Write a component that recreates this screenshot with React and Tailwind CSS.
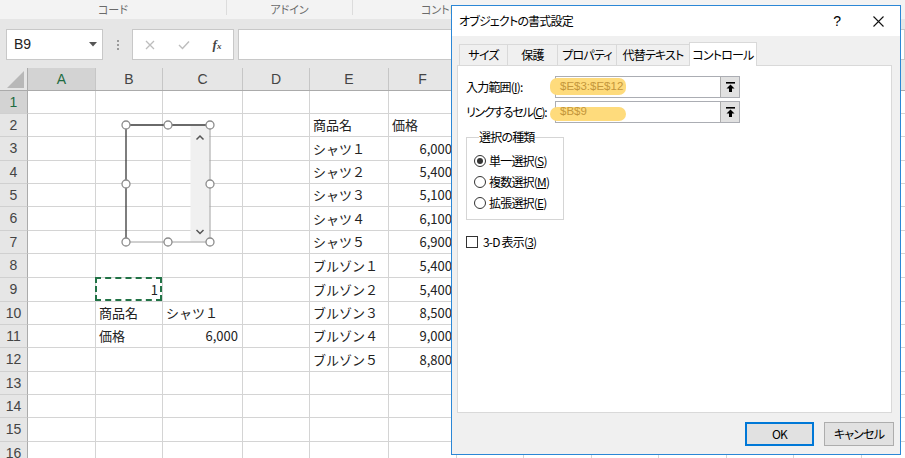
import React from 'react';

const jp = "font-['Noto_Sans_CJK_JP',sans-serif]";
const ui = "font-['Noto_Sans_CJK_JP',sans-serif] [font-feature-settings:'palt']";
const latin = "font-['Liberation_Sans',sans-serif]";

const columns = [
  { key: 'A', width: 'w-[68px]' },
  { key: 'B', width: 'w-[67px]' },
  { key: 'C', width: 'w-[80px]' },
  { key: 'D', width: 'w-[67px]' },
  { key: 'E', width: 'w-[79px]' },
  { key: 'F', width: 'w-[68px]' },
  { key: 'G', width: 'w-[67px]' },
  { key: 'H', width: 'w-[68px]' },
  { key: 'I', width: 'w-[67px]' },
  { key: 'J', width: 'w-[68px]' },
  { key: 'K', width: 'w-[67px]' },
  { key: 'L', width: 'w-[68px]' },
  { key: 'M', width: 'w-[68px]' },
];

const rowHeights = [
  'h-[23px]', 'h-[23px]', 'h-[24px]', 'h-[23px]', 'h-[23px]', 'h-[24px]', 'h-[23px]', 'h-[24px]',
  'h-[24px]', 'h-[23px]', 'h-[23px]', 'h-[24px]', 'h-[23px]', 'h-[23px]', 'h-[24px]', 'h-[24px]',
];

const cells = {
  '2E': { text: '商品名' },
  '2F': { text: '価格' },
  '3E': { text: 'シャツ１' },
  '3F': { text: '6,000', right: true },
  '4E': { text: 'シャツ２' },
  '4F': { text: '5,400', right: true },
  '5E': { text: 'シャツ３' },
  '5F': { text: '5,100', right: true },
  '6E': { text: 'シャツ４' },
  '6F': { text: '6,100', right: true },
  '7E': { text: 'シャツ５' },
  '7F': { text: '6,900', right: true },
  '8E': { text: 'ブルゾン１' },
  '8F': { text: '5,400', right: true },
  '9B': { text: '1', right: true, selected: true },
  '9E': { text: 'ブルゾン２' },
  '9F': { text: '5,400', right: true },
  '10B': { text: '商品名' },
  '10C': { text: 'シャツ１' },
  '10E': { text: 'ブルゾン３' },
  '10F': { text: '8,500', right: true },
  '11B': { text: '価格' },
  '11C': { text: '6,000', right: true },
  '11E': { text: 'ブルゾン４' },
  '11F': { text: '9,000', right: true },
  '12E': { text: 'ブルゾン５' },
  '12F': { text: '8,800', right: true },
};

function RibbonStrip() {
  return (
    <div className={`h-[19px] bg-[#f3f3f3] flex text-[11px] text-[#6b6b6b] whitespace-nowrap ${ui}`}>
      <div className="w-[226px] flex items-center justify-center">コード</div>
      <div className="w-px h-[15px] bg-[#dcdcdc]" />
      <div className="w-[125px] flex items-center justify-center">アドイン</div>
      <div className="w-px h-[15px] bg-[#dcdcdc]" />
      <div className="flex-1 flex items-center pl-[68px]">コントロール</div>
    </div>
  );
}

function FormulaBar() {
  return (
    <div className="h-[49px] bg-[#e6e6e6] flex items-start pt-[10px]">
      <div className="ml-[6px] w-[97px] h-[31px] bg-white border border-[#c8c8c8] flex items-center justify-between pl-[7px] pr-[5px]">
        <span className={`text-[14px] text-[#222] ${latin}`}>B9</span>
        <svg width="8" height="5" viewBox="0 0 8 5"><path d="M0 0 H8 L4 4.5 Z" fill="#555" /></svg>
      </div>
      <div className="w-[29px] h-[31px] flex flex-col items-center justify-center gap-[2px]">
        <span className="w-[2px] h-[2px] bg-[#9a9a9a]" />
        <span className="w-[2px] h-[2px] bg-[#9a9a9a]" />
        <span className="w-[2px] h-[2px] bg-[#9a9a9a]" />
      </div>
      <div className="w-[102px] h-[31px] bg-white border border-[#c8c8c8] flex items-center">
        <div className="w-[34px] flex justify-center">
          <svg width="10" height="10" viewBox="0 0 10 10"><path d="M1 1 L9 9 M9 1 L1 9" stroke="#bdbdbd" strokeWidth="1.3" /></svg>
        </div>
        <div className="w-[34px] flex justify-center">
          <svg width="12" height="10" viewBox="0 0 12 10"><path d="M1 5 L4.5 8.5 L11 1.5" stroke="#bdbdbd" strokeWidth="1.4" fill="none" /></svg>
        </div>
        <div className="w-[32px] flex justify-center">
          <span className="font-['Liberation_Serif',serif] italic font-bold text-[13px] text-[#444]">f<span className="text-[9px]">x</span></span>
        </div>
      </div>
      <div className="ml-[4px] flex-1 h-[31px] bg-white border border-[#c8c8c8]" />
    </div>
  );
}

function ColumnHeaders() {
  return (
    <div className={`h-[23px] flex bg-[#e6e6e6] border-b border-[#ababab] text-[14px] text-[#444] ${latin}`}>
      <div className="w-[28px] shrink-0 border-r border-[#ababab] flex items-end justify-end pr-[3px] pb-[2px]">
        <svg width="17" height="17" viewBox="0 0 17 17"><path d="M17 0 V17 H0 Z" fill="#b8b8b8" /></svg>
      </div>
      {columns.map((c) => (
        <div
          key={c.key}
          className={`${c.width} shrink-0 flex items-center justify-center border-r border-[#c6c6c6] ${c.key === 'A' ? 'bg-[#d3d3d3] text-[#1e6b41]' : ''}`}
        >
          {c.key}
        </div>
      ))}
    </div>
  );
}

function Grid() {
  return (
    <div>
      {rowHeights.map((h, i) => {
        const row = i + 1;
        return (
          <div key={row} className={`flex ${h}`}>
            <div
              className={`w-[28px] shrink-0 flex items-center justify-center border-r border-b border-r-[#ababab] border-b-[#d0d0d0] text-[14px] ${latin} ${row === 1 ? 'bg-[#d3d3d3] text-[#1e6b41]' : 'bg-[#e6e6e6] text-[#444]'}`}
            >
              {row}
            </div>
            {columns.map((c) => {
              const cell = cells[`${row}${c.key}`];
              return (
                <div
                  key={c.key}
                  className={`${c.width} relative shrink-0 flex items-center border-r border-b border-[#d4d4d4] whitespace-nowrap text-[13px] text-[#222] ${jp} ${cell && cell.right ? 'justify-end pr-[4px]' : 'pl-[3px]'}`}
                >
                  {cell && cell.text}
                  {cell && cell.selected && (
                    <div className="absolute -left-px -top-px right-0 bottom-0 border-2 border-dashed border-[#217346]" />
                  )}
                </div>
              );
            })}
          </div>
        );
      })}
    </div>
  );
}

function ListBoxShape() {
  const handles = [
    [6, 6], [48, 6], [90, 6], [6, 65], [90, 65], [6, 123], [48, 123], [90, 123],
  ];
  return (
    <svg className="absolute left-[120px] top-[119px]" width="96" height="130" viewBox="0 0 96 130">
      <rect x="70.5" y="7" width="19" height="115.5" fill="#f0f0f0" />
      <path d="M6 123 V6 H90" stroke="#3a3a3a" strokeWidth="1.3" fill="none" />
      <path d="M90 6 V123 H6" stroke="#a0a0a0" strokeWidth="1" fill="none" />
      <path d="M76.5 20.5 L80 17 L83.5 20.5" stroke="#555" strokeWidth="1.5" fill="none" />
      <path d="M76.5 111 L80 114.5 L83.5 111" stroke="#555" strokeWidth="1.5" fill="none" />
      {handles.map(([x, y]) => (
        <circle key={`${x}-${y}`} cx={x} cy={y} r="4" fill="#fff" stroke="#8c8c8c" strokeWidth="1.3" />
      ))}
    </svg>
  );
}

function RefInput({ value, markTop, markHeight }) {
  return (
    <div className="relative w-[185px] h-[22px] bg-white border border-[#abadb3] flex items-stretch">
      <div className="absolute -left-[6px] w-[76px] rounded-[7px] bg-[#fedb7c]" style={{ top: markTop, height: markHeight }} />
      <div className={`relative flex-1 flex items-center pl-[4px] text-[11.5px] tracking-normal text-[#c4963a] ${latin}`}>{value}</div>
      <div className="w-[19px] bg-[#e1e1e1] border-l border-[#adadad] flex items-center justify-center">
        <svg width="9" height="10" viewBox="0 0 9 10">
          <rect x="0" y="0" width="9" height="1.6" fill="#000" />
          <path d="M4.5 2.5 L8.5 6.5 H6 V10 H3 V6.5 H0.5 Z" fill="#000" />
        </svg>
      </div>
    </div>
  );
}

function Radio({ checked, label, hot }) {
  return (
    <div className="h-[21px] flex items-center">
      <div className="w-[12px] h-[12px] rounded-full border border-[#333] bg-white flex items-center justify-center">
        {checked && <div className="w-[6px] h-[6px] rounded-full bg-[#333]" />}
      </div>
      <span className="ml-[3px]">
        {label}(<span className="underline">{hot}</span>)
      </span>
    </div>
  );
}

function Dialog() {
  const tabs = [
    { label: 'サイズ', width: 'w-[48px]' },
    { label: '保護', width: 'w-[50px]' },
    { label: 'プロパティ', width: 'w-[59px]' },
    { label: '代替テキスト', width: 'w-[73px]' },
  ];
  return (
    <div className={`absolute left-[451px] top-[5px] w-[450px] h-[450px] border border-[#2b87d6] bg-[#f0f0f0] flex flex-col text-[12px] text-black whitespace-nowrap tracking-[-0.8px] ${ui}`}>
      <div className="h-[30px] bg-white flex items-center pl-[7px]">
        <span>オブジェクトの書式設定</span>
        <span className={`ml-auto text-[14px] tracking-normal ${latin}`}>?</span>
        <svg className="ml-[32px] mr-[16px]" width="11" height="11" viewBox="0 0 11 11">
          <path d="M0.5 0.5 L10.5 10.5 M10.5 0.5 L0.5 10.5" stroke="#111" strokeWidth="1.1" />
        </svg>
      </div>
      <div className="flex-1 flex flex-col pl-[5px] pt-[6px]">
        <div className="h-[23px] flex items-end pl-[2px]">
          {tabs.map((t) => (
            <div key={t.label} className={`${t.width} h-[21px] border-t border-l border-[#d9d9d9] flex items-center justify-center`}>
              {t.label}
            </div>
          ))}
          <div className="relative z-10 w-[68px] h-[24px] -mb-px bg-white border-t border-x border-[#d9d9d9] flex items-center justify-center">
            コントロール
          </div>
        </div>
        <div className="w-[435px] h-[348px] bg-white border border-[#d9d9d9] pl-[8px] pt-[10px] flex flex-col">
          <div className="flex items-center">
            <span className="w-[89px] shrink-0">入力範囲(<span className="underline">I</span>):</span>
            <RefInput value="$E$3:$E$12" markTop={1} markHeight={17} />
          </div>
          <div className="flex items-center mt-[3px]">
            <span className="w-[89px] shrink-0 tracking-[-1.3px]">リンクするセル(<span className="underline">C</span>):</span>
            <RefInput value="$B$9" markTop={5} markHeight={14} />
          </div>
          <fieldset className="mt-[7px] w-[98px] h-[90px] border border-[#d5d5d5] pl-[7px] pt-[6px]">
            <legend className="ml-[5px] leading-[14px]">選択の種類</legend>
            <Radio checked label="単一選択" hot="S" />
            <Radio label="複数選択" hot="M" />
            <Radio label="拡張選択" hot="E" />
          </fieldset>
          <div className="mt-[13px] flex items-center">
            <div className="w-[12px] h-[12px] border border-[#333] bg-white" />
            <span className="ml-[5px]">3-D 表示(<span className="underline">3</span>)</span>
          </div>
        </div>
        <div className="mt-[9px] flex justify-end gap-[10px] pr-[6px]">
          <div className="w-[69px] h-[24px] bg-[#e1e1e1] border-2 border-[#0078d7] flex items-center justify-center">OK</div>
          <div className="w-[70px] h-[24px] bg-[#e1e1e1] border border-[#adadad] flex items-center justify-center">キャンセル</div>
        </div>
      </div>
    </div>
  );
}

export default function App() {
  return (
    <div className="relative w-[905px] h-[458px] overflow-hidden bg-white">
      <RibbonStrip />
      <FormulaBar />
      <ColumnHeaders />
      <Grid />
      <ListBoxShape />
      <Dialog />
    </div>
  );
}
